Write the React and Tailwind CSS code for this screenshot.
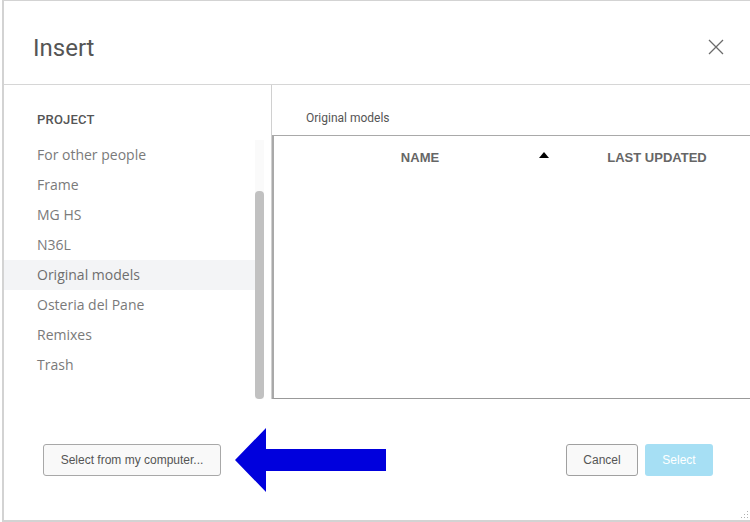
import React from 'react';

const projects = [
  'For other people',
  'Frame',
  'MG HS',
  'N36L',
  'Original models',
  'Osteria del Pane',
  'Remixes',
  'Trash',
];

function CloseIcon() {
  return (
    <svg width="16" height="16" viewBox="0 0 16 16" className="block">
      <path d="M1 1 L15 15 M15 1 L1 15" stroke="#6b6b6b" strokeWidth="1.3" fill="none" />
    </svg>
  );
}

function BlueArrow() {
  return (
    <svg width="152" height="64" viewBox="0 0 152 64" className="block">
      <polygon points="0,32 31,0 31,21 151,21 151,43 31,43 31,64" fill="#0000dd" />
    </svg>
  );
}

export default function App() {
  const selected = 'Original models';

  return (
    <div className="relative w-[750px] h-[522px] bg-white overflow-hidden font-['Roboto',sans-serif]">
      <div className="ml-[2px] h-[522px] flex flex-col border-l-2 border-t border-b-2 border-[#d3d3d3]">
        {/* header */}
        <div className="h-[84px] shrink-0 flex items-center justify-between pl-[29px] pr-[26px] pt-[10px] border-b border-[#d6d6d6]">
          <h1 className="text-[24px] text-[#555] leading-none">Insert</h1>
          <button className="mt-[-2px]">
            <CloseIcon />
          </button>
        </div>

        {/* body */}
        <div className="h-[314px] shrink-0 flex">
          <div className="w-[268px] shrink-0 flex flex-col border-r border-[#d0d0d0]">
            <div className="h-[55px] shrink-0 pl-[33px] pt-[25px] text-[13px] font-medium text-[#555] tracking-[0.2px]">
              PROJECT
            </div>
            <div className="flex-1 flex">
              <ul className="w-[251px] font-['Open_Sans',sans-serif] text-[14px] text-[#7a7a7a]">
                {projects.map((p) => (
                  <li
                    key={p}
                    className={
                      'h-[30px] flex items-center pl-[33px] pb-[2px] ' +
                      (p === selected ? 'bg-[#f3f4f6] text-[#6e6e6e]' : '')
                    }
                  >
                    {p}
                  </li>
                ))}
              </ul>
              <div className="w-[9px] flex flex-col bg-[#fafafa]">
                <div className="h-[51px]" />
                <div className="flex-1 bg-[#c1c1c1] rounded-[4px]" />
              </div>
            </div>
          </div>

          <div className="flex-1 flex flex-col">
            <div className="h-[50px] shrink-0 pl-[34px] pt-[24px] text-[12px] text-[#555]">
              Original models
            </div>
            <div className="flex-1 border-t border-l-2 border-b border-[#a9a9a9] border-b-[#999]">
              <div className="flex h-[44px] items-center text-[13px] font-bold text-[#666] font-['Liberation_Sans',sans-serif]">
                <div className="relative w-[292px] text-center">
                  NAME
                  <span className="absolute right-[17px] top-[4px] w-0 h-0 border-l-[5px] border-r-[5px] border-b-[6px] border-l-transparent border-r-transparent border-b-black" />
                </div>
                <div className="flex-1 text-center pr-[2px]">LAST UPDATED</div>
              </div>
            </div>
          </div>
        </div>

        {/* footer */}
        <div className="flex-1 flex items-center pl-[39px] pr-[37px] font-['Liberation_Sans',sans-serif] text-[12px]">
          <button className="w-[178px] h-[32px] rounded-[3px] border border-[#a8a8a8] bg-[#f9f9f9] text-[#555]">
            Select from my computer...
          </button>
          <div className="ml-[14px]">
            <BlueArrow />
          </div>
          <div className="ml-auto flex gap-[7px]">
            <button className="w-[72px] h-[32px] rounded-[3px] border border-[#a0a0a0] bg-[#f9f9f9] text-[#555]">
              Cancel
            </button>
            <button className="w-[68px] h-[32px] rounded-[3px] bg-[#a6dff4] text-white">
              Select
            </button>
          </div>
        </div>
      </div>

      <svg width="8" height="8" viewBox="0 0 8 8" className="absolute right-[1px] bottom-[3px]">
        <rect x="6" y="0" width="1" height="1" fill="#b0b0b0" />
        <rect x="3" y="3" width="1" height="1" fill="#b0b0b0" />
        <rect x="6" y="3" width="1" height="1" fill="#b0b0b0" />
        <rect x="0" y="6" width="1" height="1" fill="#b0b0b0" />
        <rect x="3" y="6" width="1" height="1" fill="#b0b0b0" />
        <rect x="6" y="6" width="1" height="1" fill="#b0b0b0" />
      </svg>
    </div>
  );
}
